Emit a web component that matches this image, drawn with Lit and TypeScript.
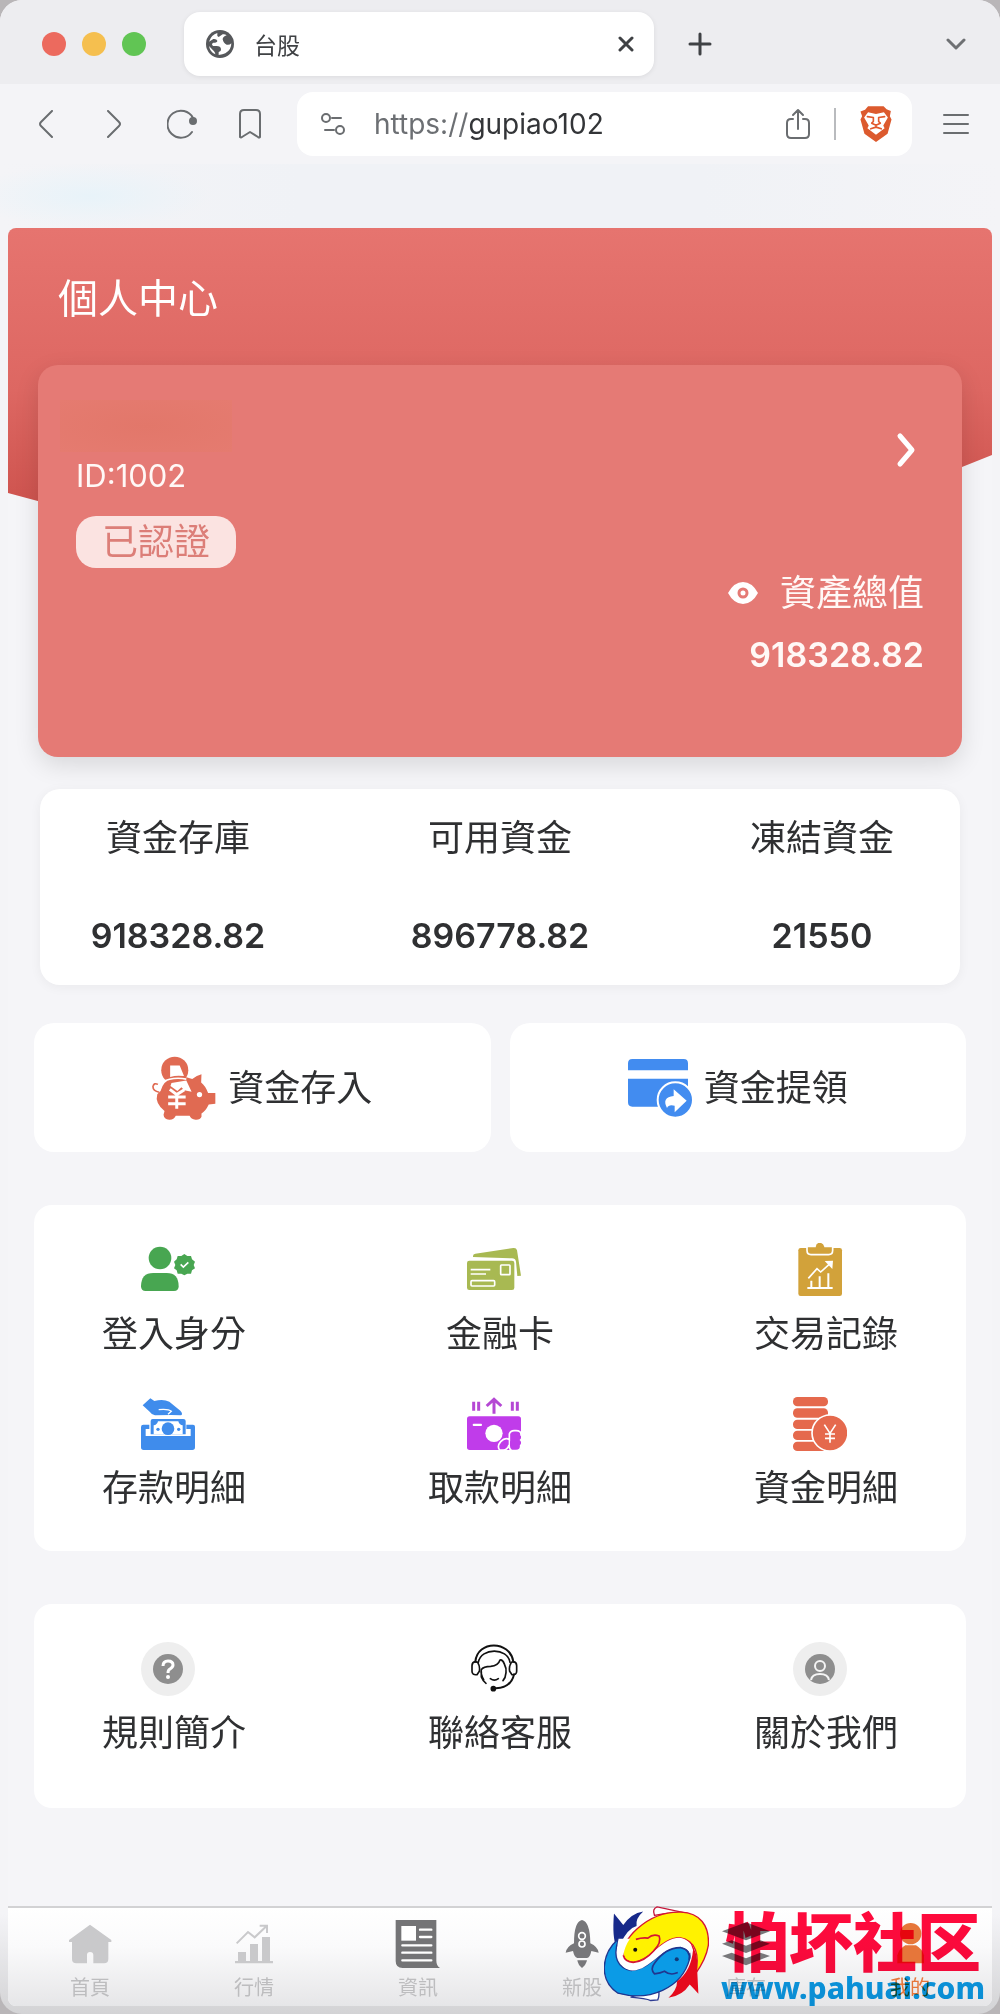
import { html, svg, css, LitElement, TemplateResult } from "lit";
import { customElement, property, state } from "lit/decorators.js";
import { classMap } from "lit/directives/class-map.js";

type Entry = {
	label: string;
	icon: TemplateResult;
};

type Fund = {
	label: string;
	value: string;
};

const depositIcon = html`<svg viewBox="456 886 194 194">
	<circle cx="525" cy="929" r="41" fill="#e06a52" />
	<path d="M482 992 Q490 962 515 955 Q550 944 578 956 Q592 944 606 941 L605 966 Q618 976 626 998 L648 998 V1031 L628 1033 Q618 1054 606 1060 V1070 Q602 1080 588 1079 Q574 1078 570 1067 H528 Q522 1080 508 1079 Q492 1077 491 1064 L494 1053 Q464 1028 472 1002Z" fill="#e06a52" />
	<path d="M474 972 Q462 966 459 978 Q458 992 478 996" fill="none" stroke="#e06a52" stroke-width="5" />
	<path d="M511 915 H540 L553 947 Q530 943 511 950Z M515 968 L560 960 L576 994 L554 990 L545 981 L533 992 L512 977Z" fill="#fff" />
	<path d="M486 966 Q518 948 560 956" fill="none" stroke="#fff" stroke-width="5" />
	<path d="M510 987 L531 1003 L554 988 M531 1002 V1046 M505 1010 H558 M505 1031 H558" fill="none" stroke="#fff" stroke-width="9" />
	<circle cx="600" cy="1003" r="8" fill="#fff" />
</svg>`;

const withdrawIcon = html`<svg viewBox="384 168 192 192">
	<path d="M384 211 V190 Q384 177 397 177 H551 Q564 177 564 190 V211Z M384 236 H564 V320 H397 Q384 320 384 307Z" fill="#428cf0" />
	<circle cx="526" cy="300" r="53" fill="#428cf0" stroke="#fff" stroke-width="6" />
	<path d="M521 268 L560 302 L524 337 V317 Q506 312 501 324 Q484 292 521 288Z" fill="#fff" />
</svg>`;

const services: Entry[] = [
	{
		label: "登入身分",
		icon: html`<svg viewBox="123 72 162 162" fill="#48a651">
			<circle cx="180" cy="117" r="34" />
			<path d="M123 202 Q123 162 160 162 H200 Q236 162 236 202 Q236 216 222 216 H137 Q123 216 123 202Z" />
			<path d="M253 105 l9 6 11 0 3 10 9 7 -4 10 4 10 -9 6 -3 10 -11 0 -9 5 -9 -5 -11 0 -3 -10 -8 -6 4 -10 -4 -10 8 -7 3 -10 11 0Z" />
			<path d="M242 136 L250 144 L265 130" fill="none" stroke="#fff" stroke-width="5" />
		</svg>`,
	},
	{
		label: "金融卡",
		icon: html`<svg viewBox="1101 72 162 162" fill="#a8b952">
			<path d="M1119 114 Q1118 105 1126 104 L1240 87 Q1249 86 1251 94 L1263 170 L1252 171 L1248 128 Q1246 118 1236 118Z" />
			<rect x="1101" y="125" width="142" height="88" rx="7" />
			<path d="M1112 152 H1171 M1112 165 H1158" stroke="#fff" stroke-width="5" />
			<rect x="1113" y="185" width="71" height="16" rx="3" fill="none" stroke="#fff" stroke-width="5" />
			<rect x="1202" y="138" width="28" height="29" rx="2" fill="none" stroke="#fff" stroke-width="5" />
		</svg>`,
	},
	{
		label: "交易記錄",
		icon: html`<svg viewBox="1059 72 162 162" fill="#d2a23a">
			<rect x="1075" y="87" width="131" height="144" rx="7" />
			<path d="M1101 82 H1125 Q1126 69 1139 69 Q1152 69 1155 82 H1178 V94 Q1178 107 1166 107 H1113 Q1101 107 1101 94Z" stroke="#fff" stroke-width="5" />
			<path d="M1105 178 L1131 149 L1142 159 L1170 134" fill="none" stroke="#fff" stroke-width="5" />
			<path d="M1154 126 L1179 125 L1177 150Z" fill="#fff" />
			<path d="M1102 207 H1178 M1114 207 V185 M1139 207 V172 M1165 207 V163" stroke="#fff" stroke-width="6" />
		</svg>`,
	},
	{
		label: "存款明細",
		icon: html`<svg viewBox="123 531 162 162" fill="#3f8cec">
			<path d="M128 556 L151 535 L163 543 Q190 536 208 545 L241 572 Q250 582 243 586 L213 585 L165 586 Q155 584 149 575Z" />
			<path d="M176 569 Q205 566 214 574 L204 583" fill="none" stroke="#fff" stroke-width="4" />
			<path d="M130 614 H148 V627 H137 V648 H272 V627 H259 V614 H279 Q285 614 285 620 V682 Q285 690 277 690 H131 Q123 690 123 682 V621 Q123 614 130 614Z" />
			<path d="M152 643 V603 Q152 597 158 597 H250 Q257 597 257 603 V643Z" />
			<path d="M161 643 V616 Q171 615 174 604 H235 Q238 615 248 616 V643Z" fill="#fff" />
			<circle cx="204" cy="626" r="19" />
			<circle cx="174" cy="628" r="5" />
			<circle cx="236" cy="628" r="5" />
		</svg>`,
	},
	{
		label: "取款明細",
		icon: html`<svg viewBox="1101 531 162 162" fill="#c03cea">
			<path d="M1121 545 V572 M1136 545 V572 M1237 545 V572 M1252 545 V572 M1182 581 V541 M1160 558 L1182 538 L1204 558" fill="none" stroke="#b548d4" stroke-width="9" />
			<rect x="1101" y="589" width="162" height="101" rx="8" />
			<rect x="1118" y="611" width="28" height="7" rx="3" fill="#fff" />
			<circle cx="1182" cy="640" r="26" fill="#fff" />
			<path d="M1199 690 Q1190 679 1202 665 Q1216 650 1228 659 V642 Q1232 630 1246 632 Q1264 631 1263 645 Q1270 652 1262 660 Q1270 668 1262 677 Q1263 692 1248 692 H1235 Q1227 687 1227 675 Q1222 690 1210 690Z" stroke="#fff" stroke-width="5" />
			<path d="M1228 657 V678" stroke="#fff" stroke-width="4" />
		</svg>`,
	},
	{
		label: "資金明細",
		icon: html`<svg viewBox="1059 531 162 162" fill="#e5694d">
			${[531, 565, 599, 632, 665].map((y) => svg`<rect x="1059" y=${y} width="105" height="28" rx="13" />`)}
			<circle cx="1170" cy="639" r="54" stroke="#fff" stroke-width="5" />
			<path d="M1153 614 L1170 640 L1187 614 M1170 640 V668 M1155 642 H1185 M1155 655 H1185" fill="none" stroke="#fff" stroke-width="5" />
		</svg>`,
	},
];

const help: Entry[] = [
	{
		label: "規則簡介",
		icon: html`<svg viewBox="0 0 54 54">
			<circle cx="27" cy="27" r="27" fill="#eeeeee" />
			<circle cx="27" cy="27" r="15" fill="#8e8e8e" />
			<path d="M22 24 Q22 19 27 19 Q32 19 32 23 Q32 25 29 27 Q27 28 27 31" fill="none" stroke="#fff" stroke-width="3" />
			<circle cx="27" cy="35" r="2" fill="#fff" />
		</svg>`,
	},
	{
		label: "聯絡客服",
		icon: html`<svg viewBox="51 33 162 162" fill="none" stroke="#111" stroke-width="5" stroke-linecap="round" stroke-linejoin="round">
			<path d="M76 92 C82 27 180 27 190 92" stroke-width="6" />
			<path d="M85 94 C93 49 173 49 180 94" />
			<path d="M76 92 Q66 94 66 104 V121 Q66 133 81 131 L88 121 Q91 107 83 94Z M190 92 Q200 94 200 104 V121 Q200 133 186 131 L179 121 Q176 107 184 94Z" />
			<path d="M101 146 Q91 129 94 116 Q100 106 122 106 Q145 104 150 87 Q158 85 163 99 Q170 112 168 125 Q167 140 159 149 M94 122 V138 Q99 151 108 157" />
			<path d="M121 143 Q133 152 145 143" />
			<path d="M192 130 Q184 169 138 172" stroke-width="6" />
			<circle cx="130" cy="173" r="6" fill="#111" />
		</svg>`,
	},
	{
		label: "關於我們",
		icon: html`<svg viewBox="0 0 54 54">
			<circle cx="27" cy="27" r="27" fill="#eeeeee" />
			<circle cx="27" cy="27" r="15" fill="#8e8e8e" />
			<circle cx="27" cy="24" r="5" fill="none" stroke="#f4f4f4" stroke-width="2" />
			<path d="M18 38 Q19 32 27 32 Q35 32 36 38" fill="none" stroke="#f4f4f4" stroke-width="2" />
		</svg>`,
	},
];

const tabs: Entry[] = [
	{
		label: "首頁",
		icon: html`<svg viewBox="198 90 144 144" fill="#c9c9cb">
			<path d="M270 104 L334 150 V156 H325 V207 Q325 220 312 220 H280 V195 Q280 186 270 186 Q261 186 261 195 V220 H229 Q216 220 216 207 V156 H207 V150Z" />
		</svg>`,
	},
	{
		label: "行情",
		icon: html`<svg viewBox="690 90 144 144" fill="#c9c9cb">
			<path d="M714 186 H738 V213 H750 V162 H774 V213 H786 V141 H810 V213 H819 V220 H705 V213 H714Z" />
			<path d="M710 160 L744 126 L764 142 L799 109 M779 107 H801 V129" fill="none" stroke="#c9c9cb" stroke-width="6" />
		</svg>`,
	},
	{
		label: "資訊",
		icon: html`<svg viewBox="1182 90 144 144" fill="#747476">
			<path d="M1187 90 H1309 V212 Q1309 226 1320 234 H1208 Q1187 234 1187 213Z" />
			<rect x="1204" y="108" width="44" height="44" fill="#fff" />
			<path d="M1260 119 H1294 M1260 141 H1294 M1207 166 H1294 M1207 188 H1294 M1207 211 H1294" stroke="#fff" stroke-width="7" stroke-linecap="round" />
		</svg>`,
	},
	{
		label: "新股",
		icon: html`<svg viewBox="54 90 144 144" fill="#77777a">
			<path d="M126 90 Q150 94 151 160 Q173 170 176 188 L154 183 Q150 203 141 204 H112 Q103 202 99 183 L77 188 Q80 170 102 160 Q102 94 126 90Z M112 211 H141 Q138 225 126 234 Q114 225 112 211Z" />
			<circle cx="126" cy="138" r="10" fill="none" stroke="#fff" stroke-width="5" />
			<circle cx="126" cy="162" r="9" fill="none" stroke="#fff" stroke-width="5" />
		</svg>`,
	},
	{
		label: "庫存",
		icon: html`<svg viewBox="546 90 144 144" fill="#77777a">
			<path d="M546 124 L618 97 L690 124 L618 151Z" />
			<path d="M546 161 L575 151 L618 167 L661 151 L690 161 L618 189Z M546 198 L575 188 L618 205 L661 188 L690 198 L618 226Z" />
		</svg>`,
	},
	{
		label: "我的",
		icon: html`<svg viewBox="1040 90 144 144" fill="#e6763a">
			<circle cx="1114" cy="131" r="32" />
			<path d="M1074 220 V196 Q1078 178 1098 166 H1130 Q1150 178 1154 196 V220Z" />
		</svg>`,
	},
];

const fishLogo = html`<svg class="fish" viewBox="204 48 316 288">
	<path d="M242 172 Q228 145 234 70 L262 105 Q285 70 322 64 Q298 85 302 108 Q275 115 252 164Z" fill="#17298a" />
	<path d="M356 76 Q348 56 364 50 L455 70 Q400 64 356 76Z" fill="#fff" stroke="#c5163a" stroke-width="4" />
	<path d="M366 330 Q373 312 366 298 L284 322 Q330 326 345 332Z" fill="#fff" stroke="#2c3a92" stroke-width="4" />
	<path d="M262 196 C250 158 330 62 436 66 C492 68 522 106 518 166 C514 190 502 220 480 250 C492 196 482 152 432 143 C374 143 346 213 292 217 Q267 214 262 196Z" fill="#fff200" stroke="#d51532" stroke-width="4" />
	<path d="M248 146 C196 190 186 270 246 310 C340 336 438 296 462 206 Q468 176 432 171 C374 170 345 240 286 242 C246 234 228 202 248 146Z" fill="#0b9be6" stroke="#20368f" stroke-width="4" />
	<path d="M248 146 C236 196 250 238 290 242 C346 240 374 170 436 172 Q456 176 462 192 Q474 150 432 143 C374 143 346 213 292 217 Q267 214 262 196 Q266 170 282 146Z" fill="#fff" />
	<path d="M262 196 Q267 216 292 217 C320 216 338 200 354 182 Q378 158 370 138 Q352 130 336 144 Q318 142 300 148" fill="none" stroke="#d51532" stroke-width="5" />
	<path d="M436 173 C398 172 374 194 356 220 Q342 238 356 252 Q374 250 386 244 Q404 258 426 248 M436 173 Q466 180 460 210" fill="none" stroke="#20368f" stroke-width="5" />
	<path d="M462 152 Q488 190 484 230 L488 312 Q474 296 462 284 Q440 318 398 324 Q424 300 424 274 Q466 244 472 180Z" fill="#e50a1c" />
	<circle cx="298" cy="179" r="6" fill="#111" />
	<circle cx="423" cy="208" r="6" fill="#123a7a" />
</svg>`;

@customElement("browser-bar")
export class BrowserBar extends LitElement {
	static styles = css`
		:host {
			display: block;
			color: #3f4144;
		}
		button {
			display: flex;
			align-items: center;
			justify-content: center;
			padding: 0;
			border: none;
			background: none;
			color: inherit;
			cursor: pointer;
		}
		svg {
			display: block;
			fill: none;
			stroke: currentColor;
			stroke-width: 2;
			stroke-linecap: round;
			stroke-linejoin: round;
		}
		.thick {
			stroke-width: 3;
		}
		.plain {
			stroke: none;
		}
		.face {
			stroke: #e2582c;
			stroke-width: 5;
		}
		.strip {
			display: flex;
			align-items: center;
			padding: 12px 34px 8px 42px;
			background: #ededf0;
		}
		.lights {
			display: flex;
			gap: 16px;
			margin-right: 38px;
		}
		.light {
			width: 24px;
			height: 24px;
			border-radius: 50%;
			background: #ec6a5e;
		}
		.light.min {
			background: #f5bf4f;
		}
		.light.max {
			background: #61c554;
		}
		.tab {
			display: flex;
			flex: 0 1 470px;
			align-items: center;
			gap: 20px;
			box-sizing: border-box;
			height: 64px;
			padding: 0 20px 0 22px;
			border-radius: 16px;
			background: #fff;
			box-shadow: 0 1px 5px rgba(0, 0, 0, 0.08);
			font-size: 23px;
		}
		.tab .title {
			flex: 1;
		}
		.add {
			margin-left: 34px;
		}
		.more {
			margin-left: auto;
			color: #6e7073;
		}
		.tools {
			display: flex;
			align-items: center;
			gap: 26px;
			padding: 8px 26px 8px 25px;
			color: #6a6d70;
		}
		.tools > button {
			width: 42px;
			height: 42px;
		}
		.tools > button.menu {
			width: 36px;
		}
		.address {
			display: flex;
			flex: 1;
			align-items: center;
			gap: 24px;
			height: 64px;
			padding: 0 20px 0 24px;
			border-radius: 16px;
			background: #fff;
		}
		.url {
			flex: 1;
			margin-left: 5px;
			font-size: 28px;
			color: #6c6f73;
		}
		.url b {
			font-weight: 400;
			color: #333538;
		}
		.rule {
			width: 2px;
			height: 32px;
			background: #b9bbbe;
		}
		.bookmarks {
			height: 64px;
			background: radial-gradient(120px 32px at 90px 32px, #e8f3f9, transparent),
				linear-gradient(90deg, transparent, #f0f2f6 30%, #f0f2f6 70%, transparent);
		}
	`;

	@property()
	title = "";

	@property()
	host = "";

	render() {
		return html`<div class="strip">
				<div class="lights">
					<button class="light" aria-label="close window"></button>
					<button class="light min" aria-label="minimize"></button>
					<button class="light max" aria-label="maximize"></button>
				</div>
				<div class="tab">
					<svg class="plain" width="28" height="28" viewBox="618 90 84 84">
						<circle cx="660" cy="132" r="42" fill="#56585b" />
						<path d="M627 125 Q634 104 652 99 Q650 108 656 111 L668 103 Q674 101 680 106 Q668 110 668 118 Q670 130 680 134 Q688 136 694 130 Q694 150 676 160 Q668 164 656 165 V156 Q664 154 663 148 Q662 138 650 138 H640 Q632 132 640 128 Q652 128 652 122 Q650 116 640 117Z" fill="#fff" />
						<path d="M627 138 L642 154 Q646 158 646 163 Q630 156 627 138Z" fill="#fff" />
					</svg>
					<span class="title">${this.title}</span>
					<button aria-label="close tab">
						<svg class="thick" width="16" height="16" viewBox="0 0 16 16"><path d="M2 2 L14 14 M14 2 L2 14" /></svg>
					</button>
				</div>
				<button class="add" aria-label="new tab">
					<svg class="thick" width="24" height="24" viewBox="0 0 24 24"><path d="M12 2 V22 M2 12 H22" /></svg>
				</button>
				<button class="more" aria-label="tab list">
					<svg class="thick" width="20" height="14" viewBox="0 0 20 14"><path d="M2 3 L10 11 L18 3" /></svg>
				</button>
			</div>
			<div class="tools">
				<button aria-label="back">
					<svg width="16" height="28" viewBox="0 0 16 28"><path d="M14 1 L3 12 Q1 14 3 16 L14 27" /></svg>
				</button>
				<button aria-label="forward">
					<svg width="16" height="28" viewBox="0 0 16 28"><path d="M2 1 L13 12 Q15 14 13 16 L2 27" /></svg>
				</button>
				<button aria-label="reload">
					<svg width="30" height="30" viewBox="0 0 30 30">
						<path d="M26 9 A13.500 13.500 0 1 0 25 23" />
						<circle cx="26" cy="12" r="3" fill="currentColor" />
					</svg>
				</button>
				<button aria-label="bookmark">
					<svg width="24" height="30" viewBox="0 0 24 30"><path d="M2 5 Q2 1 6 1 H18 Q22 1 22 5 V28 Q21 29 20 28 L12 23 L4 28 Q3 29 2 28Z" /></svg>
				</button>
				<div class="address">
					<svg width="24" height="24" viewBox="0 0 24 24">
						<circle cx="5" cy="6" r="4" />
						<circle cx="19" cy="18" r="4" />
						<path d="M11 6 H20 M4 18 H13" />
					</svg>
					<span class="url">https://<b>${this.host}</b></span>
					<button aria-label="share">
						<svg width="24" height="32" viewBox="0 0 24 32">
							<path d="M7 11 H5 Q1 11 1 15 V26 Q1 30 5 30 H19 Q23 30 23 26 V15 Q23 11 19 11 H17 M12 21 V2 M7 7 L12 2 L17 7" />
						</svg>
					</button>
					<span class="rule"></span>
					<button aria-label="shields">
						<svg class="plain" width="32" height="36" viewBox="1080 317 96 109">
							<path d="M1104 318 H1151 L1160 327 L1173 332 L1170 348 L1175 358 L1163 401 L1128 426 L1093 401 L1081 358 L1086 348 L1081 334 L1095 328Z" fill="#dc5a2e" />
							<path d="M1104 336 L1128 341 L1152 336 L1164 352 L1150 376 L1154 384 L1128 404 L1102 384 L1106 376 L1092 352Z" fill="#fff" />
							<path class="face" d="M1102 349 L1120 352 V364 L1115 369 L1128 375 L1141 369 L1136 364 V352 L1154 349 M1128 375 V382 M1112 386 L1128 381 L1144 386" />
						</svg>
					</button>
				</div>
				<button class="menu" aria-label="menu">
					<svg width="28" height="22" viewBox="0 0 28 22"><path d="M2 2 H26 M2 11 H26 M2 20 H26" /></svg>
				</button>
			</div>
			<div class="bookmarks"></div>`;
	}
}

@customElement("app-root")
export class AppRoot extends LitElement {
	static styles = css`
		:host {
			display: block;
			background: #b9b6b8;
			font-family: Inter, "Noto Sans CJK TC", sans-serif;
			color: #2f3032;
		}
		h1,
		p,
		dl,
		dd {
			margin: 0;
		}
		button {
			padding: 0;
			border: none;
			background: none;
			color: inherit;
			font: inherit;
			cursor: pointer;
		}
		a {
			color: inherit;
			text-decoration: none;
		}
		svg {
			display: block;
		}
		.window {
			display: flex;
			flex-direction: column;
			box-sizing: border-box;
			min-height: 100vh;
			padding-bottom: 8px;
			border-radius: 22px;
			overflow: hidden;
			background: linear-gradient(0deg, #d3d3d5, #f4f4f7 100px);
		}
		.page {
			display: flex;
			flex: 1;
			flex-direction: column;
			margin: 0 8px;
			border-radius: 8px;
			background: #f5f5f8;
			font-size: 36px;
			line-height: 42px;
		}
		main {
			flex: 1;
			padding-bottom: 54px;
		}
		.hero {
			display: grid;
		}
		.backdrop,
		.profile {
			grid-area: 1 / 1;
		}
		.backdrop {
			height: 408px;
			border-radius: 8px 8px 0 0;
			background: linear-gradient(#e6746f, #dd6762 40%, #cd524d 70%);
			clip-path: polygon(0 0, 100% 0, 100% 227px, 54% 408px, 0 265px);
		}
		.profile {
			z-index: 1;
			padding: 41px 30px 0;
		}
		h1 {
			padding-left: 20px;
			margin-bottom: 36px;
			font-size: 40px;
			font-weight: 400;
			line-height: 60px;
			color: #fff;
		}
		.card {
			padding: 35px 38px 81px;
			border-radius: 20px;
			background: #e57a75;
			box-shadow: 0 8px 24px rgba(0, 0, 0, 0.12);
			color: #fff8f6;
		}
		.top {
			display: flex;
			justify-content: space-between;
		}
		.name {
			width: 172px;
			height: 52px;
			margin-left: -16px;
			background: radial-gradient(#e2776a, #e57b70);
		}
		.id {
			font-size: 31px;
			line-height: 48px;
		}
		.badge {
			width: 160px;
			margin-top: 16px;
			border-radius: 20px;
			background: #fbe3e1;
			color: #dc7e78;
			line-height: 52px;
			text-align: center;
		}
		.detail {
			align-self: flex-start;
			margin-top: 32px;
			padding: 0 8px;
		}
		.assets {
			display: flex;
			flex-direction: column;
			align-items: flex-end;
			gap: 20px;
			margin-top: 4px;
		}
		.assets-label {
			display: flex;
			align-items: center;
			gap: 22px;
		}
		.total,
		.fund dd {
			font-size: 34px;
			font-weight: 600;
		}
		.funds {
			display: flex;
			justify-content: space-between;
			margin: 32px 32px 0;
			padding: 28px 48px;
			border-radius: 20px;
			background: #fff;
			box-shadow: 0 2px 12px rgba(0, 0, 0, 0.05);
		}
		.fund {
			display: flex;
			flex-direction: column;
			align-items: center;
			gap: 56px;
			width: 180px;
		}
		.actions {
			display: grid;
			grid-template-columns: 1fr 1fr;
			gap: 19px;
			margin: 38px 26px 0;
		}
		.action {
			display: flex;
			align-items: center;
			justify-content: center;
			gap: 12px;
			height: 129px;
			border-radius: 20px;
			background: #fff;
		}
		.action svg {
			width: 64px;
			height: 64px;
		}
		.panel {
			display: grid;
			grid-template-columns: repeat(3, 180px);
			justify-content: space-between;
			row-gap: 42px;
			margin: 53px 26px 0;
			padding: 38px 50px 42px;
			border-radius: 18px;
			background: #fff;
		}
		.panel.help {
			padding-bottom: 54px;
		}
		.entry {
			display: flex;
			flex-direction: column;
			align-items: center;
			gap: 16px;
		}
		.entry svg {
			width: 54px;
			height: 54px;
			margin-right: 12px;
		}
		.tabbar {
			position: relative;
			display: grid;
			grid-template-columns: repeat(6, 1fr);
			padding: 12px 0 4px;
			border-top: 2px solid #d2d2d4;
			border-radius: 0 0 8px 8px;
			background: linear-gradient(#fff, #fafafb 40%, #e6e6e8);
			font-size: 20px;
			line-height: 28px;
			color: #bdbdbf;
		}
		.tabbar a {
			display: flex;
			flex-direction: column;
			align-items: center;
			gap: 6px;
		}
		.tabbar svg {
			width: 48px;
			height: 48px;
		}
		.tabbar a.active {
			color: #e6763a;
		}
		.stamp {
			position: absolute;
			top: -2px;
			right: 7px;
			display: flex;
			align-items: flex-start;
			gap: 12px;
			pointer-events: none;
		}
		.tabbar .fish {
			width: 105px;
			height: 96px;
		}
		.words {
			mix-blend-mode: multiply;
			text-align: center;
		}
		.words p {
			font-family: "Noto Sans CJK SC", sans-serif;
			font-size: 64px;
			font-weight: 900;
			line-height: 64px;
			color: #ff0a3c;
		}
		.words .site {
			font-family: "Noto Sans", sans-serif;
			font-size: 30px;
			font-weight: 800;
			line-height: 36px;
			color: #0b9be6;
		}
	`;

	@property({ type: Array })
	funds: Fund[] = [
		{ label: "資金存庫", value: "918328.82" },
		{ label: "可用資金", value: "896778.82" },
		{ label: "凍結資金", value: "21550" },
	];

	@state()
	activeTab = "我的";

	render() {
		return html`<div class="window">
			<browser-bar title="台股" host="gupiao102"></browser-bar>
			<div class="page">
				<main>
					<section class="hero">
						<div class="backdrop"></div>
						<div class="profile">
							<h1>個人中心</h1>
							${this.renderCard()}
						</div>
					</section>
					<dl class="funds">
						${this.funds.map(
							(fund) => html`<div class="fund">
								<dt>${fund.label}</dt>
								<dd>${fund.value}</dd>
							</div>`
						)}
					</dl>
					<div class="actions">
						<button class="action">${depositIcon}<span>資金存入</span></button>
						<button class="action">${withdrawIcon}<span>資金提領</span></button>
					</div>
					<section class="panel">${services.map((entry) => this.renderEntry(entry))}</section>
					<section class="panel help">${help.map((entry) => this.renderEntry(entry))}</section>
				</main>
				<nav class="tabbar">
					${tabs.map(
						(tab) => html`<a
							href="#"
							class=${classMap({ active: tab.label === this.activeTab })}
							@click=${(event: Event) => this.selectTab(event, tab)}
							>${tab.icon}<span>${tab.label}</span></a
						>`
					)}
					<div class="stamp">
						${fishLogo}
						<div class="words">
							<p>怕坏社区</p>
							<p class="site">www.pahuai.com</p>
						</div>
					</div>
				</nav>
			</div>
		</div>`;
	}

	renderCard() {
		return html`<div class="card">
			<div class="top">
				<div>
					<div class="name"></div>
					<p class="id">ID:1002</p>
					<p class="badge">已認證</p>
				</div>
				<button class="detail" aria-label="detail">
					<svg width="20" height="36" viewBox="0 0 20 36" fill="none" stroke="#fff" stroke-width="5" stroke-linecap="round" stroke-linejoin="round">
						<path d="M4 4 L16 18 L4 32" />
					</svg>
				</button>
			</div>
			<div class="assets">
				<div class="assets-label">
					<svg width="30" height="22" viewBox="0 0 30 22" fill="#fff">
						<path d="M0 11 Q6 0 15 0 Q24 0 30 11 Q24 22 15 22 Q6 22 0 11Z" />
						<circle cx="15" cy="11" r="4" fill="none" stroke="#e57a75" stroke-width="3" />
					</svg>
					<span>資產總值</span>
				</div>
				<p class="total">${this.funds[0].value}</p>
			</div>
		</div>`;
	}

	renderEntry(entry: Entry) {
		return html`<button class="entry">${entry.icon}<span>${entry.label}</span></button>`;
	}

	selectTab(event: Event, tab: Entry) {
		event.preventDefault();
		this.activeTab = tab.label;
	}
}
